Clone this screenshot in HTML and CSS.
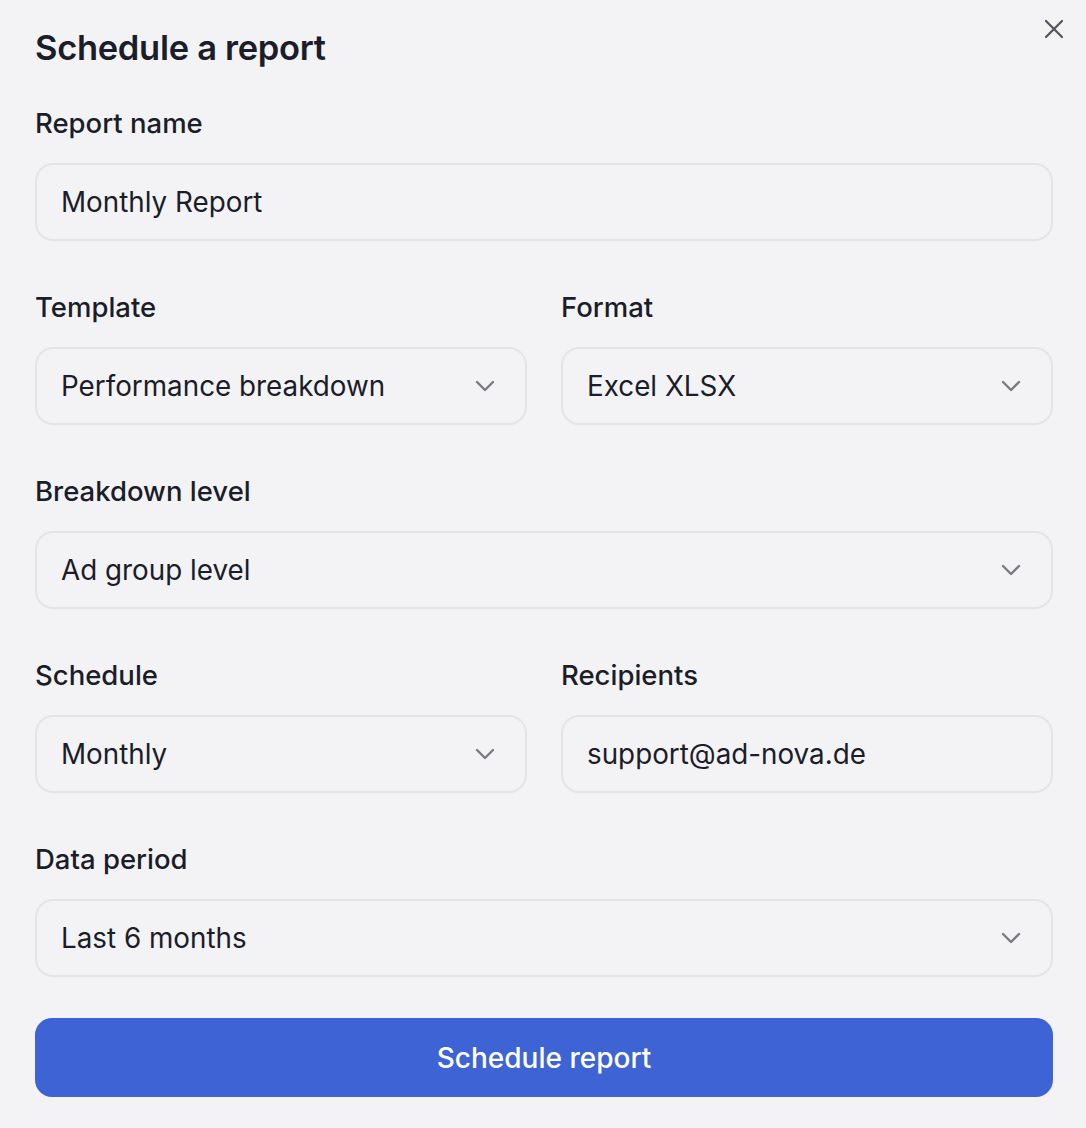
FILE: index.html
```html
<!DOCTYPE html>
<html lang="en">
<head>
<meta charset="utf-8">
<title>Schedule a report</title>
<link rel="stylesheet" href="styles.css">
</head>
<body>
<div class="dialog">
  <button class="close" aria-label="Close">
    <svg width="20" height="20" viewBox="0 0 20 20"><path d="M2 2 L18 18 M18 2 L2 18" stroke="#52525b" stroke-width="2.2" stroke-linecap="round" fill="none"/></svg>
  </button>
  <h1 class="title">Schedule a report</h1>
  <form class="form">
    <div class="field">
      <label class="label">Report name</label>
      <div class="input">Monthly Report</div>
    </div>
    <div class="row">
      <div class="field">
        <label class="label">Template</label>
        <div class="input select">Performance breakdown<svg class="chev" width="20" height="12" viewBox="0 0 20 12"><path d="M2 2 L10 10 L18 2" stroke="#7a7a82" stroke-width="2.4" fill="none" stroke-linecap="round" stroke-linejoin="round"/></svg></div>
      </div>
      <div class="field">
        <label class="label">Format</label>
        <div class="input select">Excel XLSX<svg class="chev" width="20" height="12" viewBox="0 0 20 12"><path d="M2 2 L10 10 L18 2" stroke="#7a7a82" stroke-width="2.4" fill="none" stroke-linecap="round" stroke-linejoin="round"/></svg></div>
      </div>
    </div>
    <div class="field">
      <label class="label">Breakdown level</label>
      <div class="input select">Ad group level<svg class="chev" width="20" height="12" viewBox="0 0 20 12"><path d="M2 2 L10 10 L18 2" stroke="#7a7a82" stroke-width="2.4" fill="none" stroke-linecap="round" stroke-linejoin="round"/></svg></div>
    </div>
    <div class="row">
      <div class="field">
        <label class="label">Schedule</label>
        <div class="input select">Monthly<svg class="chev" width="20" height="12" viewBox="0 0 20 12"><path d="M2 2 L10 10 L18 2" stroke="#7a7a82" stroke-width="2.4" fill="none" stroke-linecap="round" stroke-linejoin="round"/></svg></div>
      </div>
      <div class="field">
        <label class="label">Recipients</label>
        <div class="input">support@ad-nova.de</div>
      </div>
    </div>
    <div class="field">
      <label class="label">Data period</label>
      <div class="input select">Last 6 months<svg class="chev" width="20" height="12" viewBox="0 0 20 12"><path d="M2 2 L10 10 L18 2" stroke="#7a7a82" stroke-width="2.4" fill="none" stroke-linecap="round" stroke-linejoin="round"/></svg></div>
    </div>
    <button type="button" class="submit">Schedule report</button>
  </form>
</div>
</body>
</html>
```

FILE: styles.css
```css
html, body {
  margin: 0;
  padding: 0;
  background: #f3f3f6;
}
body {
  font-family: Inter, "Noto Sans", sans-serif;
  color: #1b1d29;
}
.dialog {
  position: relative;
  padding: 28px 33px 0 35px;
}
.close {
  position: absolute;
  top: 19px;
  right: 22px;
  width: 20px;
  height: 20px;
  padding: 0;
  border: 0;
  background: none;
  display: flex;
}
.title {
  margin: 0;
  font-size: 34.5px;
  line-height: 40px;
  font-weight: 600;
  letter-spacing: -0.3px;
}
.form {
  margin-top: 39px;
  display: flex;
  flex-direction: column;
  gap: 50px;
}
.row {
  display: grid;
  grid-template-columns: 1fr 1fr;
  gap: 34px;
}
.field {
  display: flex;
  flex-direction: column;
  gap: 24px;
}
.label {
  font-size: 27.5px;
  line-height: 32px;
  font-weight: 500;
}
.input {
  box-sizing: border-box;
  height: 78px;
  border: 2px solid #e4e4e8;
  border-radius: 18px;
  padding: 0 30px 0 24px;
  display: flex;
  align-items: center;
  justify-content: space-between;
  font-size: 27.8px;
}
.chev {
  flex: none;
}
.submit {
  margin-top: -9px;
  height: 79px;
  border: 0;
  border-radius: 17px;
  background: #3e63d4;
  color: #ffffff;
  font-family: Inter, sans-serif;
  font-size: 28px;
  font-weight: 500;
}
```
